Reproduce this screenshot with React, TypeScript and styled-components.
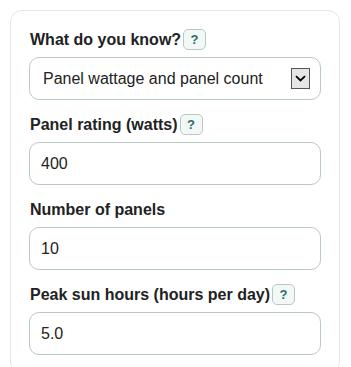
import React from 'react'
import styled, { createGlobalStyle } from 'styled-components'

const GlobalStyle = createGlobalStyle`
  body {
    margin: 0;
    background: #ffffff;
    font-family: "Liberation Sans", Arial, sans-serif;
  }
`

const Card = styled.div`
  margin: 10px 11px 0 10px;
  padding: 18px 18px 4px 18px;
  border: 1px solid #e1e7e5;
  border-radius: 12px;
  background: #ffffff;
`

const Field = styled.div`
  margin-bottom: 14px;
`

const LabelRow = styled.div`
  display: flex;
  align-items: center;
  height: 21px;
  margin-bottom: 7px;
`

const Label = styled.label`
  font-size: 16px;
  font-weight: 700;
  color: #222222;
  padding-left: 1px;
`

const Help = styled.button`
  display: inline-flex;
  align-items: center;
  justify-content: center;
  width: 23px;
  height: 21px;
  margin-left: 2px;
  padding: 0;
  border: 1px solid #b7c9c4;
  border-radius: 5px;
  background: #f2f8f6;
  color: #2a6d69;
  font-family: "Liberation Sans", Arial, sans-serif;
  font-size: 13px;
  font-weight: 700;
  cursor: pointer;
`

const SelectWrap = styled.div`
  position: relative;
`

const Select = styled.select`
  display: block;
  width: 100%;
  height: 43px;
  box-sizing: border-box;
  padding: 0 40px 0 13px;
  border: 1px solid #b9c9c4;
  border-radius: 10px;
  background: #ffffff;
  color: #222222;
  font-family: "Liberation Sans", Arial, sans-serif;
  font-size: 16px;
  appearance: none;
  outline: none;
`

const Arrow = styled.span`
  position: absolute;
  right: 11px;
  top: 11px;
  width: 19px;
  height: 21px;
  box-sizing: border-box;
  border: 1px solid #555555;
  background: #e6e6e6;
  display: flex;
  align-items: center;
  justify-content: center;
  pointer-events: none;
`

const Input = styled.input`
  display: block;
  width: 100%;
  height: 43px;
  box-sizing: border-box;
  padding: 0 11px;
  border: 1px solid #b9c9c4;
  border-radius: 10px;
  background: #ffffff;
  color: #222222;
  font-family: "Liberation Sans", Arial, sans-serif;
  font-size: 16px;
  outline: none;
`

const fields = [
  { label: 'Panel rating (watts)', value: '400', help: true },
  { label: 'Number of panels', value: '10', help: false },
  { label: 'Peak sun hours (hours per day)', value: '5.0', help: true },
]

export default function App() {
  return (
    <>
      <GlobalStyle />
      <Card>
        <Field>
          <LabelRow>
            <Label>What do you know?</Label>
            <Help>?</Help>
          </LabelRow>
          <SelectWrap>
            <Select defaultValue="count">
              <option value="count">Panel wattage and panel count</option>
              <option value="total">Total system size</option>
            </Select>
            <Arrow>
              <svg width="11" height="7" viewBox="0 0 11 7">
                <path d="M1 1.2 L5.5 5.5 L10 1.2" fill="none" stroke="#000" strokeWidth="1.8" />
              </svg>
            </Arrow>
          </SelectWrap>
        </Field>
        {fields.map((f) => (
          <Field key={f.label}>
            <LabelRow>
              <Label>{f.label}</Label>
              {f.help && <Help>?</Help>}
            </LabelRow>
            <Input defaultValue={f.value} />
          </Field>
        ))}
      </Card>
    </>
  )
}
